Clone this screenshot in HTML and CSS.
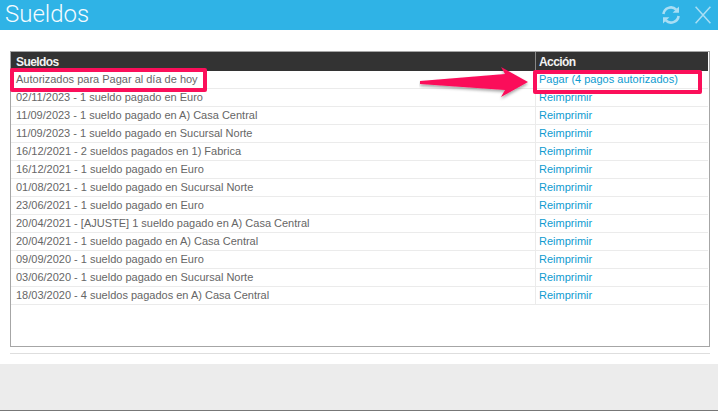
FILE: index.html
```html
<!DOCTYPE html>
<html lang="es">
<head>
<meta charset="utf-8">
<title>Sueldos</title>
<link rel="stylesheet" href="styles.css">
</head>
<body>
<header class="titlebar">
  <h1 class="title">Sueldos</h1>
  <div class="tools">
    <svg class="icon-refresh" width="20" height="20" viewBox="0 0 20 20" fill="none" stroke="#a9def4" stroke-width="2.6">
      <path d="M2.4 9A7.6 7.6 0 0 1 15.2 4.6"/>
      <path d="M17.6 11A7.6 7.6 0 0 1 4.8 15.4"/>
      <path d="M18 1.4V7.8H11.6" fill="#a9def4" stroke="none"/>
      <path d="M2 18.6V12.2H8.4" fill="#a9def4" stroke="none"/>
    </svg>
    <svg class="icon-close" width="16" height="18" viewBox="0 0 16 18" fill="none" stroke="#a9def4" stroke-width="1.5">
      <path d="M.6 .8L15.4 17.2M15.4 .8L.6 17.2"/>
    </svg>
  </div>
</header>
<main class="content">
  <section class="grid-box">
    <div class="row head">
      <div class="cell col-main">Sueldos</div>
      <div class="cell col-action">Acción</div>
    </div>
    <div class="row"><div class="cell col-main">Autorizados para Pagar al día de hoy</div><div class="cell col-action"><a href="#">Pagar (4 pagos autorizados)</a></div></div>
    <div class="row"><div class="cell col-main">02/11/2023 - 1 sueldo pagado en Euro</div><div class="cell col-action"><a href="#">Reimprimir</a></div></div>
    <div class="row"><div class="cell col-main">11/09/2023 - 1 sueldo pagado en A) Casa Central</div><div class="cell col-action"><a href="#">Reimprimir</a></div></div>
    <div class="row"><div class="cell col-main">11/09/2023 - 1 sueldo pagado en Sucursal Norte</div><div class="cell col-action"><a href="#">Reimprimir</a></div></div>
    <div class="row"><div class="cell col-main">16/12/2021 - 2 sueldos pagados en 1) Fabrica</div><div class="cell col-action"><a href="#">Reimprimir</a></div></div>
    <div class="row"><div class="cell col-main">16/12/2021 - 1 sueldo pagado en Euro</div><div class="cell col-action"><a href="#">Reimprimir</a></div></div>
    <div class="row"><div class="cell col-main">01/08/2021 - 1 sueldo pagado en Sucursal Norte</div><div class="cell col-action"><a href="#">Reimprimir</a></div></div>
    <div class="row"><div class="cell col-main">23/06/2021 - 1 sueldo pagado en Euro</div><div class="cell col-action"><a href="#">Reimprimir</a></div></div>
    <div class="row"><div class="cell col-main">20/04/2021 - [AJUSTE] 1 sueldo pagado en A) Casa Central</div><div class="cell col-action"><a href="#">Reimprimir</a></div></div>
    <div class="row"><div class="cell col-main">20/04/2021 - 1 sueldo pagado en A) Casa Central</div><div class="cell col-action"><a href="#">Reimprimir</a></div></div>
    <div class="row"><div class="cell col-main">09/09/2020 - 1 sueldo pagado en Euro</div><div class="cell col-action"><a href="#">Reimprimir</a></div></div>
    <div class="row"><div class="cell col-main">03/06/2020 - 1 sueldo pagado en Sucursal Norte</div><div class="cell col-action"><a href="#">Reimprimir</a></div></div>
    <div class="row"><div class="cell col-main">18/03/2020 - 4 sueldos pagados en A) Casa Central</div><div class="cell col-action"><a href="#">Reimprimir</a></div></div>
  </section>
  <hr class="rule">
</main>
<footer class="footer"></footer>

<div class="mark mark-left"></div>
<div class="mark mark-right"></div>
<svg class="arrow" width="112" height="38" viewBox="0 0 112 38">
  <defs><filter id="sh" x="-10%" y="-20%" width="120%" height="150%"><feDropShadow dx="0" dy="2" stdDeviation="1.5" flood-color="#000" flood-opacity=".35"/></filter></defs>
  <path d="M1 15L86 8L82 1L109 16L82 31L86 24L1 18Z" fill="#fb0f5a" filter="url(#sh)"/>
</svg>
</body>
</html>
```

FILE: styles.css
```css
* { box-sizing: border-box; }
html, body { margin: 0; height: 100%; }
body {
  width: 718px;
  height: 411px;
  overflow: hidden;
  background: #fff;
  font-family: "Liberation Sans", Arial, sans-serif;
  display: flex;
  flex-direction: column;
}
.titlebar {
  height: 30px;
  background: #2fb3e6;
  display: flex;
  align-items: center;
  justify-content: space-between;
  padding: 0 7px 0 5px;
  flex: none;
}
.title {
  margin: 0;
  align-self: flex-start;
  font-size: 24px;
  font-weight: 300;
  line-height: 28px;
  color: #f4fbff;
  font-family: Roboto, "Liberation Sans", sans-serif;
}
.tools { display: flex; align-items: center; gap: 14px; }
.tools svg { display: block; }
.content {
  flex: 1;
  padding: 21px 8px 0 10px;
}
.grid-box {
  height: 296px;
  border: 1px solid #a6a6a6;
  padding-right: 1px;
}
.row {
  display: flex;
  height: 18px;
  border-bottom: 1px solid #ebebeb;
  font-size: 11px;
  line-height: 16px;
  color: #666;
}
.row.head {
  height: 19px;
  border-bottom: 0;
  background: #333;
  color: #f2f2f2;
  font-weight: 700;
  font-size: 12px;
  letter-spacing: -.6px;
  line-height: 21px;
}
.cell { padding-left: 5px; white-space: nowrap; }
.col-main { width: 524px; flex: none; }
.col-action { flex: 1; padding-left: 3px; border-left: 1px solid #ebebeb; }
.head .col-action { border-left-color: #888; }
.col-action a { color: #0f9bd0; text-decoration: none; }
.rule {
  height: 1px;
  margin: 6px 0 0;
  border: 0;
  background: #dedede;
}
.footer {
  height: 47px;
  flex: none;
  background: #ececec;
  border-bottom: 1px solid #777;
}
.mark {
  position: absolute;
  border: 4px solid #fb0f5a;
  border-radius: 2px;
}
.mark-left { left: 10px; top: 68px; width: 197px; height: 24px; }
.mark-right { left: 533px; top: 70px; width: 169px; height: 24px; }
.arrow { position: absolute; left: 419px; top: 66px; }
```
